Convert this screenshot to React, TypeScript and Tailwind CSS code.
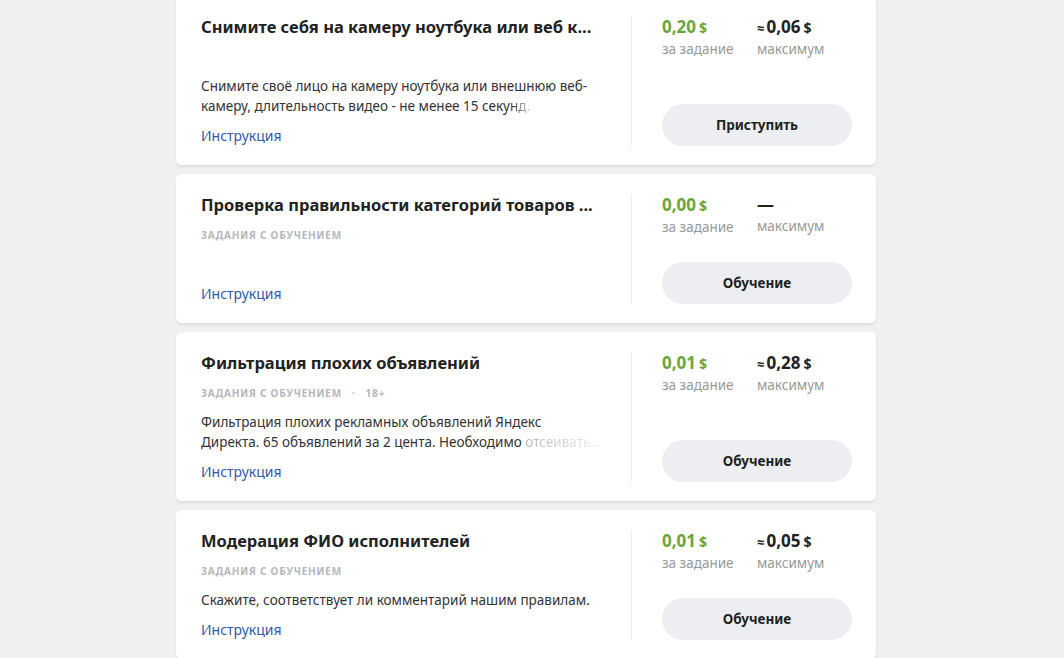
import React from 'react';

type Task = {
  title: string;
  tag?: string;
  age?: string;
  desc?: React.ReactNode[];
  price: string;
  max?: string;
  action: string;
};

const fadeDark = 'bg-gradient-to-r from-[#333] to-[#d8d8d8] bg-clip-text text-transparent';
const fadeLight = 'bg-gradient-to-r from-[#b5b5b5] to-[#f4f4f4] bg-clip-text text-transparent';

const tasks: Task[] = [
  {
    title: 'Снимите себя на камеру ноутбука или веб к...',
    desc: [
      'Снимите своё лицо на камеру ноутбука или внешнюю веб-',
      <>
        камеру, длительность видео - не менее 15 секу<span className={fadeDark}>нд.</span>
      </>,
    ],
    price: '0,20',
    max: '0,06',
    action: 'Приступить',
  },
  {
    title: 'Проверка правильности категорий товаров ...',
    tag: 'Задания с обучением',
    price: '0,00',
    action: 'Обучение',
  },
  {
    title: 'Фильтрация плохих объявлений',
    tag: 'Задания с обучением',
    age: '18+',
    desc: [
      'Фильтрация плохих рекламных объявлений Яндекс',
      <>
        Директа. 65 объявлений за 2 цента. Необходимо <span className={fadeLight}>отсеивать...</span>
      </>,
    ],
    price: '0,01',
    max: '0,28',
    action: 'Обучение',
  },
  {
    title: 'Модерация ФИО исполнителей',
    tag: 'Задания с обучением',
    desc: ['Скажите, соответствует ли комментарий нашим правилам.'],
    price: '0,01',
    max: '0,05',
    action: 'Обучение',
  },
];

function TaskCard({ task, first }: { task: Task; first?: boolean }) {
  return (
    <div
      className={`flex rounded-md bg-white shadow-[0_2px_3px_rgba(0,0,0,0.08)] pl-[25px] pr-6 pt-5 pb-[19px] ${
        first ? '-mt-1' : ''
      }`}
    >
      <div className="flex w-[400px] flex-col">
        <div className="h-[22px] overflow-hidden whitespace-nowrap text-[16.5px] font-bold leading-[22px] text-[#222]">
          {task.title}
        </div>
        <div className="mt-[8px] flex h-[22px] items-center text-[10px] font-bold uppercase tracking-[0.08em] text-[#b4b7bb]">
          {task.tag}
          {task.age && (
            <>
              <span className="mx-[10px]">·</span>
              {task.age}
            </>
          )}
        </div>
        <div className="mt-[8px] min-h-[20px] text-[13.5px] leading-[20px] text-[#333]">
          {task.desc?.map((line, i) => (
            <div key={i} className="overflow-hidden whitespace-nowrap">
              {line}
            </div>
          ))}
        </div>
        <div className="mt-[10px] text-[14px] leading-[20px] text-[#2f5ba6]">Инструкция</div>
      </div>
      <div className="ml-[30px] w-px bg-[#ececec]" />
      <div className="ml-[30px] flex flex-1 flex-col justify-between">
        <div className="flex">
          <div className="w-[95px]">
            <div className="text-[17px] font-bold leading-[22px] text-[#6aa53d]">
              {task.price}
              <span className="ml-[3px] text-[14px]">$</span>
            </div>
            <div className="text-[13.5px] leading-[20px] text-[#999]">за задание</div>
          </div>
          <div>
            <div className="text-[17px] font-bold leading-[22px] text-[#222]">
              {task.max ? (
                <>
                  <span className="mr-[2px] text-[13px]">≈</span>
                  {task.max}
                  <span className="ml-[3px] text-[14px]">$</span>
                </>
              ) : (
                '—'
              )}
            </div>
            <div className="text-[13.5px] leading-[20px] text-[#999]">максимум</div>
          </div>
        </div>
        <button className="h-[42px] w-[190px] rounded-full bg-[#eceef1] text-[13.5px] font-bold text-[#222]">
          {task.action}
        </button>
      </div>
    </div>
  );
}

export default function App() {
  return (
    <div
      className="h-[658px] w-[1064px] overflow-hidden bg-[#eef0f2]"
      style={{ fontFamily: '"Noto Sans", "Open Sans", sans-serif' }}
    >
      <div className="ml-[176px] flex w-[700px] flex-col gap-[9px]">
        {tasks.map((t, i) => (
          <TaskCard key={i} task={t} first={i === 0} />
        ))}
      </div>
    </div>
  );
}
